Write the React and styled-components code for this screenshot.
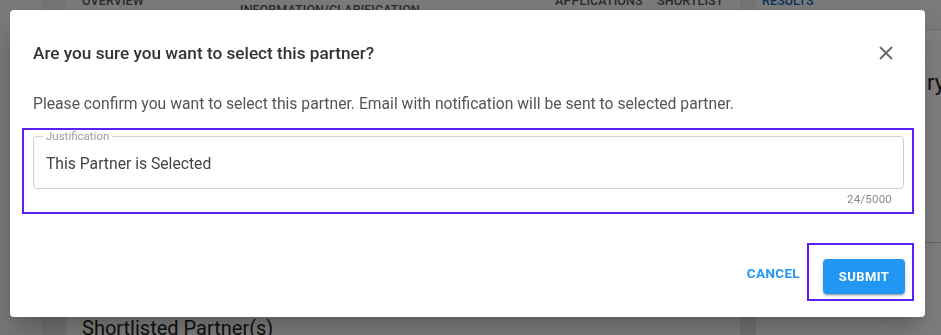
import React from "react";
import styled, { createGlobalStyle } from "styled-components";

const Global = createGlobalStyle`
  html, body { margin: 0; padding: 0; }
  body { font-family: Roboto, "Liberation Sans", sans-serif; background: #fff; overflow: hidden; }
  * { box-sizing: border-box; }
`;

const Page = styled.div`
  width: 941px;
  height: 335px;
  display: grid;
  grid-template-columns: 43px 23px 675px 15px 1fr;
  background: #fff;
`;

const Sidebar = styled.div`
  background: #f2f2f2;
  border-right: 1px solid #e0e0e0;
`;

const Gutter = styled.div`
  background: #e8e8e8;
`;

const Main = styled.div`
  background: #fff;
  display: flex;
  flex-direction: column;
  border-right: 1px solid #e0e0e0;
  overflow: hidden;
`;

const Tabs = styled.div`
  display: flex;
  height: 40px;
  background: #f5f5f5;
  padding-left: 16px;
  margin-top: -7px;
`;

const Tab = styled.div`
  flex-shrink: 0;
  font-size: 12.5px;
  font-weight: 500;
  line-height: 15px;
  color: ${(p) => (p.$active ? "#1565c0" : "#555")};
  padding-top: ${(p) => (p.$low ? "9px" : "0")};
  padding-left: ${(p) => p.$pl || 0}px;
  width: ${(p) => (p.$w ? `${p.$w}px` : "auto")};
  letter-spacing: 0.1px;
  white-space: nowrap;
`;

const Spacer = styled.div`
  flex: 1;
`;

const SectionTitle = styled.div`
  font-size: 20px;
  color: #222;
  padding: 0 0 0 16px;
  height: 22px;
  line-height: 30px;
  white-space: nowrap;
`;

const Right = styled.div`
  display: flex;
  flex-direction: column;
  background: #fff;
  overflow: hidden;
`;

const RightTop = styled.div`
  background: #f5f5f5;
  border-bottom: 1px solid #ddd;
  margin-top: -7px;
  height: 37px;
`;

const RightHead = styled.div`
  height: 213px;
  font-size: 22px;
  color: #222;
  padding: 40px 0 0 171px;
  border-bottom: 1px solid #ccc;
  white-space: nowrap;
`;

const Overlay = styled.div`
  position: fixed;
  inset: 0;
  background: rgba(0, 0, 0, 0.5);
  display: flex;
  align-items: flex-start;
  padding: 10px 0 0 10px;
`;

const Dialog = styled.div`
  width: 915px;
  height: 307px;
  background: #fff;
  border-radius: 4px;
  box-shadow: 0 11px 15px -7px rgba(0,0,0,0.2), 0 24px 38px 3px rgba(0,0,0,0.14);
  display: flex;
  flex-direction: column;
`;

const Header = styled.div`
  display: flex;
  align-items: center;
  justify-content: space-between;
  padding: 30px 24px 0 23px;
  height: 56px;
`;

const Title = styled.h2`
  margin: 0;
  font-size: 17.2px;
  font-weight: 500;
  color: #333;
`;

const CloseBtn = styled.button`
  border: 0;
  background: none;
  padding: 0;
  width: 24px;
  height: 24px;
  display: flex;
  align-items: center;
  justify-content: center;
  cursor: pointer;
  margin-right: 3px;
`;

const Body = styled.div`
  padding: 29px 11px 0 12px;
  display: flex;
  flex-direction: column;
`;

const Message = styled.p`
  margin: 0 0 0 11px;
  font-size: 15.7px;
  color: #555;
  line-height: 18px;
`;

const Highlight = styled.div`
  margin-top: 15px;
  border: 2px solid #5c1ff2;
  padding: 6px 8px 3px 9px;
  display: flex;
  flex-direction: column;
`;

const Field = styled.div`
  position: relative;
  border: 1px solid #cfcfcf;
  border-radius: 4px;
  padding: 0 12px;
  height: 53px;
  display: flex;
  align-items: center;
`;

const FloatLabel = styled.span`
  position: absolute;
  left: 9px;
  top: -7px;
  font-size: 11.5px;
  line-height: 12px;
  color: #9a9a9a;
  padding: 0 3px;
  background: #fff;
`;

const InputText = styled.div`
  font-size: 15.7px;
  color: #444;
  margin-top: 1px;
`;

const Counter = styled.div`
  align-self: flex-end;
  font-size: 11.5px;
  line-height: 20px;
  color: #888;
  padding: 0 12px 0 0;
  letter-spacing: 0.2px;
`;

const Actions = styled.div`
  margin-top: auto;
  display: flex;
  justify-content: flex-end;
  align-items: center;
  padding: 0 11px 16px 0;
`;

const TextButton = styled.button`
  border: 0;
  background: none;
  color: #2196f3;
  font-family: inherit;
  font-size: 13.4px;
  font-weight: 700;
  letter-spacing: 0.4px;
  padding: 8px 7px 8px 8px;
  cursor: pointer;
  margin-top: 2px;
`;

const SubmitBox = styled.div`
  border: 2px solid #5c1ff2;
  padding: 14px 7px 5px 14px;
`;

const Submit = styled.button`
  border: 0;
  background: #2196f3;
  color: #fff;
  font-family: inherit;
  font-size: 13px;
  font-weight: 700;
  letter-spacing: 0.4px;
  width: 82px;
  height: 35px;
  border-radius: 4px;
  box-shadow: 0 3px 1px -2px rgba(0,0,0,0.2), 0 2px 2px 0 rgba(0,0,0,0.14), 0 1px 5px 0 rgba(0,0,0,0.12);
  cursor: pointer;
`;

export default function App() {
  return (
    <>
      <Global />
      <Page>
        <Sidebar />
        <Gutter />
        <Main>
          <Tabs>
            <Tab $w={158}>OVERVIEW</Tab>
            <Tab $w={315} $low>INFORMATION/CLARIFICATION</Tab>
            <Tab $w={102}>APPLICATIONS</Tab>
            <Tab $w={100}>SHORTLIST</Tab>
          </Tabs>
          <Spacer />
          <SectionTitle>Shortlisted Partner(s)</SectionTitle>
        </Main>
        <Gutter />
        <Right>
          <RightTop>
            <Tab $active $pl={6}>RESULTS</Tab>
          </RightTop>
          <RightHead>ry</RightHead>
        </Right>
      </Page>
      <Overlay>
        <Dialog role="dialog">
          <Header>
            <Title>Are you sure you want to select this partner?</Title>
            <CloseBtn aria-label="close">
              <svg width="14" height="14" viewBox="0 0 14 14">
                <path d="M1 1 L13 13 M13 1 L1 13" stroke="#666" strokeWidth="1.8" fill="none" />
              </svg>
            </CloseBtn>
          </Header>
          <Body>
            <Message>
              Please confirm you want to select this partner. Email with notification will be sent to selected partner.
            </Message>
            <Highlight>
              <Field>
                <FloatLabel>Justification</FloatLabel>
                <InputText>This Partner is Selected</InputText>
              </Field>
              <Counter>24/5000</Counter>
            </Highlight>
          </Body>
          <Actions>
            <TextButton>CANCEL</TextButton>
            <SubmitBox>
              <Submit>SUBMIT</Submit>
            </SubmitBox>
          </Actions>
        </Dialog>
      </Overlay>
    </>
  );
}
